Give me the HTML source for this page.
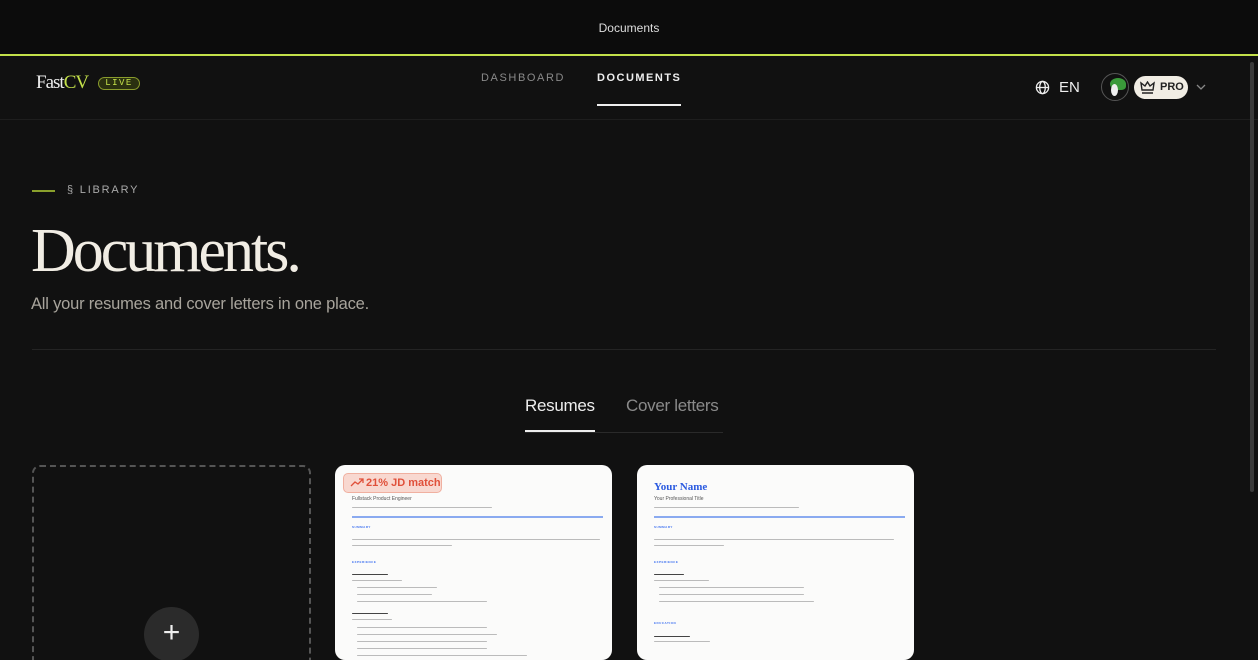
<!DOCTYPE html>
<html style="overflow:hidden;height:660px"><head><style>
*{margin:0;padding:0;box-sizing:border-box}
body{width:1258px;height:660px;overflow:hidden;background:#111111;font-family:"Liberation Sans",sans-serif;color:#eee;position:relative}
.a{position:absolute}
.rv{position:absolute;background:#fbfbfa;border-radius:10px;overflow:hidden;top:465px;width:277px;height:195px}
.l{position:absolute;height:2px;background:#bbb;border-radius:1px}
.h{position:absolute;font-size:3px;color:#3b6ff0;font-weight:bold;letter-spacing:.5px}
</style></head><body>
<div class="a" style="left:0;top:0;width:1258px;height:54px;background:#0c0c0c"></div>
<div class="a" style="left:0;top:21px;width:1258px;text-align:center;font-size:12px;color:#ddd">Documents</div>
<div class="a" style="left:0;top:54px;width:1258px;height:2px;background:#c3e04a"></div>
<div class="a" style="left:0;top:119px;width:1258px;height:1px;background:#1e1e1e"></div>
<div class="a" style="left:36px;top:72px;font-family:'Liberation Serif',serif;font-size:19px;letter-spacing:-1px;color:#eee">F<span style="color:#eee">ast</span><span style="color:#c3e04a">CV</span></div>
<div class="a" style="left:98px;top:77px;width:42px;height:13px;border:1.5px solid #8a9c2c;border-radius:7px;background:#2a3010;font-family:'Liberation Mono',monospace;font-size:9px;color:#c3e04a;text-align:center;line-height:10px;letter-spacing:1.5px">LIVE</div>
<div class="a" style="left:481px;top:72px;font-size:11px;letter-spacing:1.6px;color:#8a8a8a">DASHBOARD</div>
<div class="a" style="left:597px;top:72px;font-size:11px;letter-spacing:1.5px;color:#eee;font-weight:bold">DOCUMENTS</div>
<div class="a" style="left:597px;top:104px;width:84px;height:2px;background:#eee"></div>
<svg class="a" style="left:1035px;top:80px" width="15" height="15" viewBox="0 0 16 16" fill="none" stroke="#eee" stroke-width="1.4"><circle cx="8" cy="8" r="6.5"/><ellipse cx="8" cy="8" rx="3" ry="6.5"/><path d="M1.5 8h13"/></svg>
<div class="a" style="left:1059px;top:79px;font-size:15px;color:#eee">EN</div>
<div class="a" style="left:1101px;top:73px;width:28px;height:28px;border-radius:50%;background:#111;border:1.5px solid #555;overflow:hidden"><div style="position:absolute;left:8px;top:4px;width:16px;height:12px;background:#3a9a3a;border-radius:50% 50% 30% 50%"></div><div style="position:absolute;left:9px;top:10px;width:7px;height:12px;background:#eee;border-radius:50%"></div></div>
<div class="a" style="left:1134px;top:76px;width:54px;height:23px;border-radius:12px;background:#f1ede4;color:#222;font-size:11px;font-weight:bold;line-height:23px;padding-left:26px">PRO</div>
<svg class="a" style="left:1140px;top:81px" width="15" height="13" viewBox="0 0 15 13" fill="none" stroke="#222" stroke-width="1.4"><path d="M2 9L1 2l4 3 2.5-4L10 5l4-3-1 7z M2 12h11"/></svg>
<svg class="a" style="left:1196px;top:83px" width="10" height="8" viewBox="0 0 10 8" fill="none" stroke="#888" stroke-width="1.3"><path d="M1 2l4 4 4-4"/></svg>
<div class="a" style="left:1250px;top:62px;width:4px;height:430px;background:#3a3a3a;border-radius:2px"></div>
<div class="a" style="left:32px;top:190px;width:23px;height:2px;background:#8aa02c"></div>
<div class="a" style="left:67px;top:184px;font-size:11px;letter-spacing:1.8px;color:#aaa">§ LIBRARY</div>
<div class="a" style="left:31px;top:216px;font-family:'Liberation Serif',serif;font-size:62px;letter-spacing:-3px;color:#f1ede4">Documents.</div>
<div class="a" style="left:31px;top:295px;font-size:16.5px;letter-spacing:-0.2px;color:#a8a49c">All your resumes and cover letters in one place.</div>
<div class="a" style="left:32px;top:349px;width:1184px;height:1px;background:#242424"></div>
<div class="a" style="left:525px;top:396px;font-size:17px;letter-spacing:-0.3px;color:#eee">Resumes</div>
<div class="a" style="left:626px;top:396px;font-size:17px;letter-spacing:-0.3px;color:#8a8a8a">Cover letters</div>
<div class="a" style="left:525px;top:432px;width:198px;height:1px;background:#2a2a2a"></div>
<div class="a" style="left:525px;top:430px;width:70px;height:2px;background:#eee"></div>
<div class="a" style="left:32px;top:465px;width:279px;height:210px;border:2px dashed #555;border-radius:8px"></div>
<div class="a" style="left:144px;top:607px;width:55px;height:55px;border-radius:50%;background:#2b2b2b;color:#eee;font-size:30px;text-align:center;line-height:52px">+</div>
<div class="rv" style="left:335px">
<div class="a" style="left:8px;top:8px;width:99px;height:20px;border-radius:5px;background:#f8d8d0;border:1px solid #f0b0a0;color:#e0503a;font-size:11px;font-weight:bold;line-height:18px;padding-left:22px">21% JD match</div>
<svg class="a" style="left:15px;top:13px" width="14" height="10" viewBox="0 0 14 10" fill="none" stroke="#e0503a" stroke-width="1.3"><path d="M1 8l4-4 3 2 5-5M9 1h4v4"/></svg>
<div class="a" style="left:17px;top:31px;font-size:5px;color:#555">Fullstack Product Engineer</div>
<div class="l" style="left:17px;top:42px;width:140px;height:1px"></div>
<div class="a" style="left:17px;top:51px;width:251px;height:2px;background:#8aaaf0"></div>
<div class="h" style="left:17px;top:60px">SUMMARY</div>
<div class="l" style="left:17px;top:74px;width:248px;height:1px"></div><div class="l" style="left:17px;top:80px;width:100px;height:1px"></div>
<div class="h" style="left:17px;top:95px">EXPERIENCE</div>
<div class="l" style="left:17px;top:109px;width:36px;background:#444;height:1px"></div>
<div class="l" style="left:17px;top:115px;width:50px;height:1px"></div>
<div class="l" style="left:22px;top:122px;width:80px;height:1px"></div>
<div class="l" style="left:22px;top:129px;width:75px;height:1px"></div>
<div class="l" style="left:22px;top:136px;width:130px;height:1px"></div>
<div class="l" style="left:17px;top:148px;width:36px;background:#444;height:1px"></div>
<div class="l" style="left:17px;top:154px;width:40px;height:1px"></div>
<div class="l" style="left:22px;top:162px;width:130px;height:1px"></div>
<div class="l" style="left:22px;top:169px;width:140px;height:1px"></div>
<div class="l" style="left:22px;top:176px;width:130px;height:1px"></div>
<div class="l" style="left:22px;top:183px;width:130px;height:1px"></div>
<div class="l" style="left:22px;top:190px;width:170px;height:1px"></div>
</div>
<div class="rv" style="left:637px">
<div class="a" style="left:17px;top:16px;font-family:'Liberation Serif',serif;font-size:11px;font-weight:bold;color:#2a5ae0">Your Name</div>
<div class="a" style="left:17px;top:31px;font-size:5px;color:#555">Your Professional Title</div>
<div class="l" style="left:17px;top:42px;width:145px;height:1px"></div>
<div class="a" style="left:17px;top:51px;width:251px;height:2px;background:#8aaaf0"></div>
<div class="h" style="left:17px;top:60px">SUMMARY</div>
<div class="l" style="left:17px;top:74px;width:240px;height:1px"></div><div class="l" style="left:17px;top:80px;width:70px;height:1px"></div>
<div class="h" style="left:17px;top:95px">EXPERIENCE</div>
<div class="l" style="left:17px;top:109px;width:30px;background:#444;height:1px"></div>
<div class="l" style="left:17px;top:115px;width:55px;height:1px"></div>
<div class="l" style="left:22px;top:122px;width:145px;height:1px"></div>
<div class="l" style="left:22px;top:129px;width:145px;height:1px"></div>
<div class="l" style="left:22px;top:136px;width:155px;height:1px"></div>
<div class="h" style="left:17px;top:156px">EDUCATION</div>
<div class="l" style="left:17px;top:171px;width:36px;background:#444;height:1px"></div>
<div class="l" style="left:17px;top:176px;width:56px;height:1px"></div>
</div>
</body></html>
